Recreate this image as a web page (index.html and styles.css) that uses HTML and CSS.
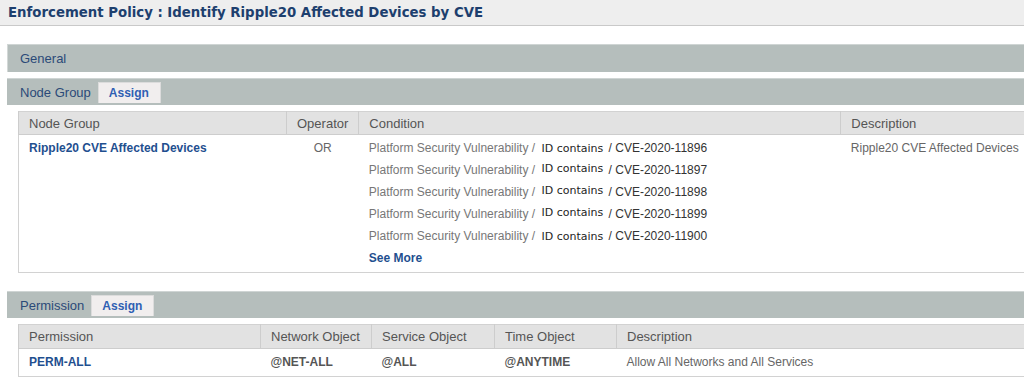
FILE: index.html
```html
<!DOCTYPE html>
<html lang="en">
<head>
    <meta charset="UTF-8">
    <title>Enforcement Policy</title>
    <link rel="stylesheet" href="styles.css">
</head>
<body>

    <div class="title-bar">Enforcement Policy : Identify Ripple20 Affected Devices by CVE</div>

    <div class="page">
        <div class="bar bar-general">General</div>

        <div class="bar">
            <span>Node Group</span>
            <span class="tab">Assign</span>
        </div>

        <table class="grid grid-nodes">
            <thead>
                <tr>
                    <th class="col-name">Node Group</th>
                    <th class="col-op">Operator</th>
                    <th class="col-cond">Condition</th>
                    <th>Description</th>
                </tr>
            </thead>
            <tbody>
                <tr>
                    <td><a class="link">Ripple20 CVE Affected Devices</a></td>
                    <td class="op">OR</td>
                    <td>
                        <div class="cond">Platform Security Vulnerability / <span class="key">ID contains</span> <span class="val">/ CVE-2020-11896</span></div>
                        <div class="cond">Platform Security Vulnerability / <span class="key up">ID contains</span> <span class="val">/ CVE-2020-11897</span></div>
                        <div class="cond">Platform Security Vulnerability / <span class="key up">ID contains</span> <span class="val">/ CVE-2020-11898</span></div>
                        <div class="cond">Platform Security Vulnerability / <span class="key up">ID contains</span> <span class="val">/ CVE-2020-11899</span></div>
                        <div class="cond">Platform Security Vulnerability / <span class="key">ID contains</span> <span class="val">/ CVE-2020-11900</span></div>
                        <div class="cond"><a class="link">See More</a></div>
                    </td>
                    <td class="desc">Ripple20 CVE Affected Devices</td>
                </tr>
            </tbody>
        </table>

        <div class="bar bar-perm">
            <span>Permission</span>
            <span class="tab">Assign</span>
        </div>

        <table class="grid grid-perms">
            <thead>
                <tr>
                    <th class="col-perm">Permission</th>
                    <th class="col-net">Network Object</th>
                    <th class="col-svc">Service Object</th>
                    <th class="col-time">Time Object</th>
                    <th>Description</th>
                </tr>
            </thead>
            <tbody>
                <tr>
                    <td><a class="link">PERM-ALL</a></td>
                    <td class="obj">@NET-ALL</td>
                    <td class="obj">@ALL</td>
                    <td class="obj">@ANYTIME</td>
                    <td class="desc">Allow All Networks and All Services</td>
                </tr>
            </tbody>
        </table>
    </div>

</body>
</html>
```

FILE: styles.css
```css
/* General */
body {
    margin: 0;
    font-family: "Liberation Sans", Arial, sans-serif;
    font-size: 12px;
    color: #555;
    background: #fff;
    overflow: hidden;
}

/* Title */
.title-bar {
    height: 25px;
    line-height: 26px;
    padding-left: 8px;
    background: #eeeeee;
    border-bottom: 1px solid #c9c9c9;
    font-family: "DejaVu Sans", Verdana, sans-serif;
    font-size: 13.3px;
    font-weight: bold;
    color: #1d3f6e;
    white-space: nowrap;
}

.page {
    width: 1080px;
    padding: 18px 0 0 7px;
}

/* Section bars */
.bar {
    display: flex;
    align-items: center;
    gap: 7px;
    height: 26px;
    padding-left: 13px;
    margin-top: 6px;
    background: #b5bebc;
    border-top: 1px solid #cfd5d4;
    color: #2b4a78;
    font-size: 13px;
}

.bar-general {
    height: 27px;
    margin-top: 0;
    border-left: 1px solid #d3d8d7;
    padding-left: 12px;
}

.bar-perm {
    margin-top: 18px;
}

.tab {
    align-self: flex-end;
    margin-bottom: 2px;
    height: 20px;
    line-height: 20px;
    padding: 0 11px 0 10px;
    background: #f1eeee;
    border: 1px solid #dcdcdc;
    border-bottom: 0;
    color: #2f5fb3;
    font-size: 12px;
    font-weight: bold;
}

/* Tables */
.grid {
    border-collapse: collapse;
    margin: 6px 0 0 11px;
    width: 1060px;
    border: 1px solid #d2d2d2;
}

.grid th {
    height: 22px;
    padding: 0 10px;
    background: #e2e2e2;
    border: 1px solid #cdcdcd;
    border-top: 0;
    font-size: 13px;
    font-weight: normal;
    color: #555;
    text-align: left;
}

.grid td {
    padding: 0 10px;
    vertical-align: top;
}

.grid-nodes tbody td {
    padding-top: 2px;
    padding-bottom: 3px;
}

.grid-nodes tbody td:first-child,
.grid-nodes tbody td.op,
.grid-nodes tbody td.desc {
    line-height: 22px;
}

.col-name { width: 247px; }
.col-op { width: 51px; text-align: center !important; }
.col-cond { width: 461px; }

.op {
    text-align: center;
    color: #666;
}

.cond {
    height: 22px;
    line-height: 22px;
    color: #777;
    white-space: nowrap;
}

.key {
    font-family: "DejaVu Sans", Verdana, sans-serif;
    font-size: 11px;
    color: #1e1e1e;
    margin: 0 2px 0 3px;
}

.key.up {
    position: relative;
    top: -2px;
}

.val {
    color: #333;
}

.link {
    color: #1f4f8f;
    font-weight: bold;
    cursor: pointer;
}

.desc {
    color: #666;
}

/* Permissions */
.grid-perms th {
    height: 23px;
}

.grid-perms td {
    height: 27px;
    line-height: 27px;
}

.col-perm { width: 221px; }
.col-net { width: 90px; }
.col-svc { width: 102px; }
.col-time { width: 101px; }

.obj {
    color: #555;
    font-weight: bold;
}
```
